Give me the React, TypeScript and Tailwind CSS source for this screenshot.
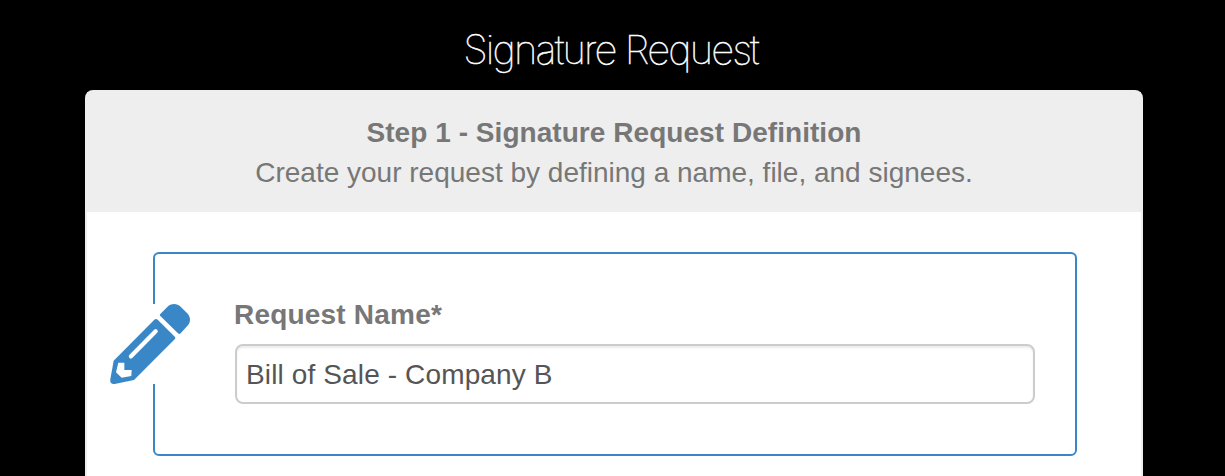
import { useState } from 'react';

const PencilIcon = () => (
  <svg viewBox="0 0 240 240" className="size-20">
    <path
      fill="#3a87c7"
      d="M151 30 L171 10 C182 -2 200 -3 212 8 L231 27 C243 39 243 55 231 67 L212 88 Q208 92 204 88 L151 36 Q148 33 151 30Z"
    />
    <path
      fill="#3a87c7"
      d="M133 47 Q138 43 143 47 L195 99 Q197 103 194 106 L72 228 L14 240 Q-1 241 1 226 L11 170Z"
    />
    <path stroke="#fff" strokeWidth="13" strokeLinecap="round" d="M63 157 L137 82" />
    <path fill="#fff" d="M25 176 L43 176 L43 198 L65 198 L64 216 L35 221 L18 205Z" />
  </svg>
);

const StepHeader = () => (
  <header className="h-[120px] bg-[#eee] pt-[21px] text-center text-[28px] leading-10 text-[#777]">
    <h2 className="font-bold tracking-[0.05px]">
      Step 1 - Signature Request Definition
    </h2>
    <p>Create your request by defining a name, file, and signees.</p>
  </header>
);

const RequestNameField = () => {
  const [name, setName] = useState('Bill of Sale - Company B');

  return (
    <section className="relative mt-10 ml-[66px] h-[204px] w-[924px] rounded-md border-2 border-[#3a87c7] px-20 pt-[41px]">
      <div className="absolute top-[50px] -left-[45px] bg-white">
        <PencilIcon />
      </div>
      <label
        htmlFor="request-name"
        className="-ml-px block text-[28px] leading-10 font-bold tracking-[0.2px] text-[#777]"
      >
        Request Name*
      </label>
      <input
        id="request-name"
        value={name}
        onChange={(e) => setName(e.target.value)}
        className="mt-[9px] block h-[60px] w-[800px] rounded-lg border-2 border-[#ccc] bg-white px-[9px] pt-0.5 text-[28px] tracking-[0.13px] text-[#555] shadow-[inset_0_2px_2px_rgba(0,0,0,0.075)] outline-none"
      />
    </section>
  );
};

export default function App() {
  return (
    <main className="flex h-screen flex-col overflow-hidden bg-black font-['Liberation_Sans',sans-serif]">
      <h1 className="h-[90px] shrink-0 pt-[30px] pr-1 text-center font-['Inter',sans-serif] text-[40px] leading-10 font-thin tracking-[-1.85px] text-white [-webkit-text-stroke:0.5px_white]">
        Signature Request
      </h1>
      <div className="ml-[85px] h-[500px] w-[1058px] shrink-0 rounded-t-lg border-2 border-[#eee] bg-white">
        <StepHeader />
        <RequestNameField />
      </div>
    </main>
  );
}
